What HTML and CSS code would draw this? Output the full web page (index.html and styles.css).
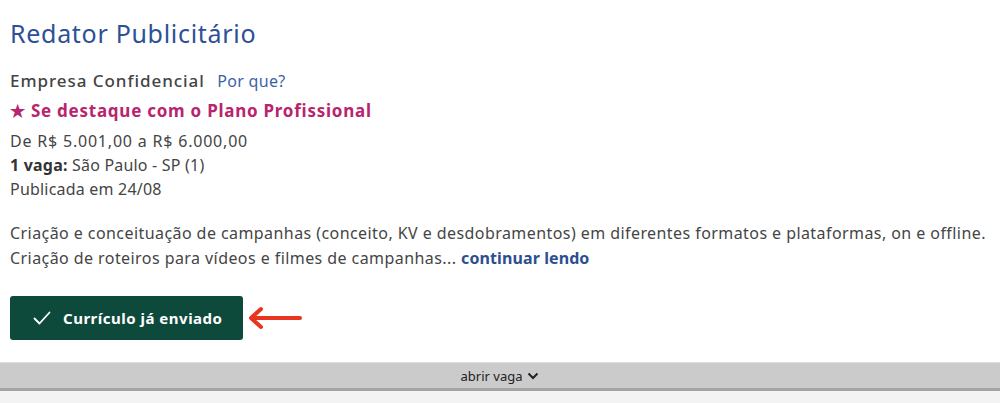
FILE: index.html
```html
<!DOCTYPE html>
<html lang="pt-BR">
<head>
<meta charset="UTF-8">
<meta name="viewport" content="width=device-width, initial-scale=1.0">
<title>Redator Publicitário</title>
<link rel="stylesheet" href="styles.css">
</head>
<body>
<div class="job">
  <h1 class="job-title">Redator Publicitário</h1>

  <div class="company">
    <span class="company-name">Empresa Confidencial</span>
    <a class="why" href="#">Por que?</a>
  </div>

  <div class="highlight">&#9733; Se destaque com o Plano Profissional</div>

  <div class="info">
    <div class="salary">De R$ 5.001,00 a R$ 6.000,00</div>
    <div><b>1 vaga:</b> São Paulo - SP (1)</div>
    <div>Publicada em 24/08</div>
  </div>

  <p class="desc">
    Criação e conceituação de campanhas (conceito, KV e desdobramentos) em diferentes formatos e plataformas, on e offline.<br>
    Criação de roteiros para vídeos e filmes de campanhas... <a class="more" href="#">continuar lendo</a>
  </p>

  <div class="actions">
    <button class="sent">
      <svg class="check" width="18" height="14" viewBox="0 0 18 14">
        <path d="M1.5 7.5 L6.5 12.5 L16.5 1.5" fill="none" stroke="#fff" stroke-width="1.8" stroke-linecap="round" stroke-linejoin="round"/>
      </svg>
      Currículo já enviado
    </button>
    <svg class="arrow" width="56" height="26" viewBox="0 0 56 26">
      <path d="M53 13 L5 13 M14 4 L4 13 L14 22" fill="none" stroke="#e8351f" stroke-width="4" stroke-linecap="round" stroke-linejoin="round"/>
    </svg>
  </div>
</div>

<div class="open-bar">abrir vaga
  <svg width="12" height="8" viewBox="0 0 12 8"><path d="M1.5 1.5 L6 6 L10.5 1.5" fill="none" stroke="#222" stroke-width="2"/></svg>
</div>
<div class="after"></div>
</body>
</html>
```

FILE: styles.css
```css
body {
  margin: 0;
  background: #fff;
  font-family: "Noto Sans", "Open Sans", sans-serif;
  color: #454545;
}

.job {
  padding: 0 10px;
}

.job-title {
  font-size: 25px;
  font-weight: 400;
  line-height: 30px;
  letter-spacing: 0.7px;
  color: #2d5096;
  margin: 18px 0 21px;
}

.company {
  line-height: 24px;
  font-size: 17px;
}

.company-name {
  font-weight: 500;
  color: #444;
  letter-spacing: 0.95px;
}

.why {
  color: #3b63a8;
  text-decoration: none;
  font-size: 16px;
  letter-spacing: 0.3px;
  margin-left: 8px;
}

.highlight {
  margin-top: 6px;
  line-height: 24px;
  font-size: 17px;
  font-weight: 700;
  letter-spacing: 0.75px;
  color: #b8246d;
}

.info {
  margin-top: 6px;
  font-size: 16px;
  line-height: 24px;
  letter-spacing: 0.2px;
}

.info .salary {
  letter-spacing: 0.8px;
}

.info b {
  font-weight: 700;
  color: #333;
}

.desc {
  margin: 20px 0 0;
  font-size: 16px;
  line-height: 25px;
  letter-spacing: 0.43px;
}

.more {
  color: #2d4f8f;
  font-weight: 700;
  letter-spacing: 0.1px;
  text-decoration: none;
}

.actions {
  margin-top: 25px;
  display: flex;
  align-items: center;
  gap: 4px;
}

.sent {
  display: flex;
  align-items: center;
  gap: 12px;
  width: 233px;
  height: 44px;
  padding: 0 0 0 23px;
  border: none;
  border-radius: 3px;
  background: #0e4a3c;
  color: #fff;
  font-family: "Noto Sans", sans-serif;
  font-size: 15px;
  font-weight: 700;
  letter-spacing: 0.5px;
}

.open-bar {
  margin-top: 22px;
  height: 25px;
  background: #cbcbcb;
  border-top: 1px solid #ddd;
  border-bottom: 3px solid #a4a4a4;
  font-size: 13px;
  color: #222;
  display: flex;
  justify-content: center;
  align-items: center;
  gap: 5px;
}

.after {
  height: 20px;
  background: #f3f3f3;
}
```
